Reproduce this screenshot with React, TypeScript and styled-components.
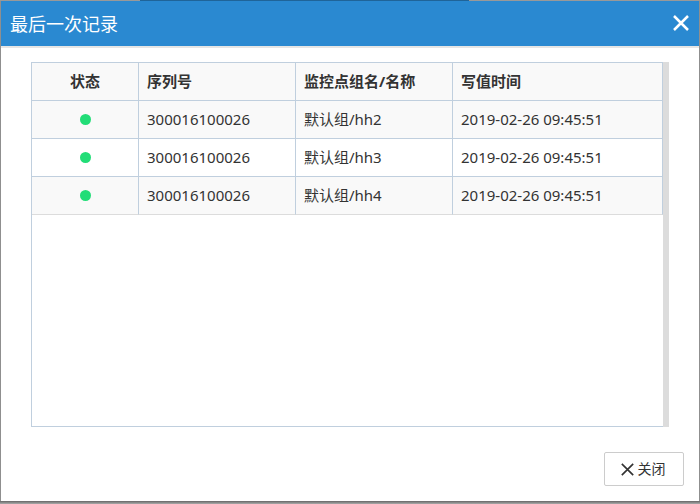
import React from "react";
import styled, { createGlobalStyle } from "styled-components";

const GlobalStyle = createGlobalStyle`
  * {
    box-sizing: border-box;
  }
  body {
    margin: 0;
    background: #8f8f8f;
    color: #333;
    font-family: "Noto Sans", "Noto Sans CJK SC", sans-serif;
    font-size: 15px;
  }
`;

const Backdrop = styled.div`
  display: flex;
  min-height: 100vh;
  padding: 1px 1px 3px;
  background:
    linear-gradient(90deg, #999 20%, #1f6499 20% 67%, #999 67%) top / 100% 1px no-repeat,
    linear-gradient(#666, #aaa) bottom / 100% 3px no-repeat,
    #8f8f8f;
`;

const Dialog = styled.section`
  display: flex;
  flex: 1;
  flex-direction: column;
  background: #fff;
`;

const Header = styled.header`
  display: flex;
  align-items: center;
  justify-content: space-between;
  height: 47px;
  padding: 0 10px 0 9px;
  border-bottom: 2px solid #e5e5e5;
  background: #2a89d1;
  color: #fff;
`;

const Title = styled.h1`
  margin: 0;
  font-size: 18px;
  font-weight: 400;
  line-height: 24px;
`;

const IconButton = styled.button`
  display: flex;
  padding: 0 0 2px;
  border: 0;
  background: none;
  color: inherit;
  cursor: pointer;
`;

const Content = styled.main`
  display: flex;
  flex: 1;
  padding: 14px 30px 0;
`;

const TableFrame = styled.div`
  flex: 1;
  border: solid #c0cfde;
  border-width: 1px 0 1px 1px;
`;

const ScrollTrack = styled.div`
  width: 6px;
  background: #dcdcdc;
`;

const Table = styled.table`
  width: 100%;
  border-spacing: 0;
  table-layout: fixed;
`;

const Row = styled.tr`
  height: 38px;
  background: #f9f9f9;

  tbody &:nth-child(even) {
    background: #fff;
  }
`;

const cellAlign = (p: { $center?: boolean }) => (p.$center ? "center" : "left");

const HeadCell = styled.th<{ $center?: boolean; $width?: string }>`
  width: ${(p) => p.$width ?? "auto"};
  padding: 0 8px 2px;
  border: solid #c0cfde;
  border-width: 0 1px 1px 0;
  font-weight: 700;
  line-height: 20px;
  text-align: ${cellAlign};
`;

const Cell = styled.td<{ $center?: boolean }>`
  padding: 0 8px 2px;
  border: solid #c0cfde;
  border-width: 0 1px 1px 0;
  line-height: 20px;
  text-align: ${cellAlign};

  tr:last-child > & {
    border-bottom-color: #dcdcdc;
  }
`;

const StatusDot = styled.span`
  display: inline-block;
  width: 11px;
  height: 11px;
  border-radius: 50%;
  background: #22dd77;
`;

const Footer = styled.footer`
  display: flex;
  justify-content: flex-end;
  padding: 25px 15px 15px;
`;

const CloseButton = styled.button`
  display: flex;
  align-items: center;
  justify-content: center;
  gap: 4px;
  width: 80px;
  height: 34px;
  padding: 0 2px 0 0;
  border: 1px solid #ccc;
  border-radius: 2px;
  background: #fff;
  color: #333;
  font-family: inherit;
  font-size: 14px;
  line-height: 20px;
  cursor: pointer;
`;

function Cross({ size, stroke }: { size: number; stroke: number }) {
  return (
    <svg width={size} height={size} viewBox="0 0 16 16" fill="none" stroke="currentColor" strokeWidth={stroke} aria-hidden="true">
      <path d="M1 1 15 15M15 1 1 15" />
    </svg>
  );
}

const records = [
  { serial: "300016100026", point: "默认组/hh2", time: "2019-02-26 09:45:51" },
  { serial: "300016100026", point: "默认组/hh3", time: "2019-02-26 09:45:51" },
  { serial: "300016100026", point: "默认组/hh4", time: "2019-02-26 09:45:51" },
];

export default function App() {
  return (
    <>
      <GlobalStyle />
      <Backdrop>
        <Dialog role="dialog" aria-labelledby="dialog-title">
          <Header>
            <Title id="dialog-title">最后一次记录</Title>
            <IconButton type="button" aria-label="关闭">
              <Cross size={16} stroke={2.5} />
            </IconButton>
          </Header>
          <Content>
            <TableFrame>
              <Table>
                <thead>
                  <Row>
                    <HeadCell $center $width="107px">状态</HeadCell>
                    <HeadCell $width="157px">序列号</HeadCell>
                    <HeadCell $width="157px">监控点组名/名称</HeadCell>
                    <HeadCell>写值时间</HeadCell>
                  </Row>
                </thead>
                <tbody>
                  {records.map((record) => (
                    <Row key={record.point}>
                      <Cell $center>
                        <StatusDot role="img" aria-label="正常" />
                      </Cell>
                      <Cell>{record.serial}</Cell>
                      <Cell>{record.point}</Cell>
                      <Cell>{record.time}</Cell>
                    </Row>
                  ))}
                </tbody>
              </Table>
            </TableFrame>
            <ScrollTrack />
          </Content>
          <Footer>
            <CloseButton type="button">
              <Cross size={13} stroke={2} />
              关闭
            </CloseButton>
          </Footer>
        </Dialog>
      </Backdrop>
    </>
  );
}
